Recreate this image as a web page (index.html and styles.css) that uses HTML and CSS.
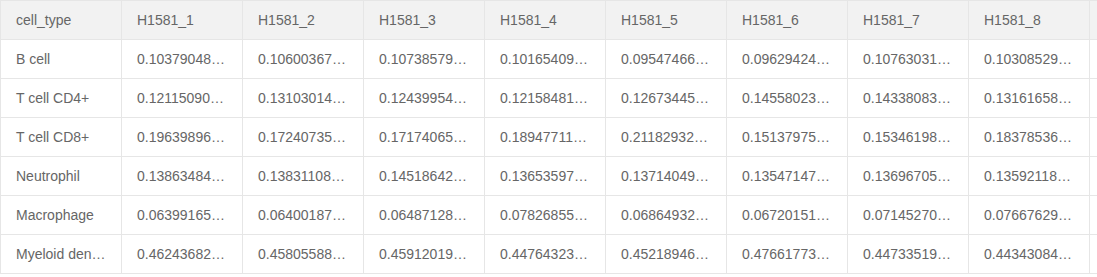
FILE: index.html
```html
<!DOCTYPE html>
<html>
<head>
<meta charset="utf-8">
<link rel="stylesheet" href="styles.css">
</head>
<body>
<div class="table-view">
<table class="grid">
<thead>
<tr>
<th><div class="cell">cell_type</div></th>
<th><div class="cell">H1581_1</div></th>
<th><div class="cell">H1581_2</div></th>
<th><div class="cell">H1581_3</div></th>
<th><div class="cell">H1581_4</div></th>
<th><div class="cell">H1581_5</div></th>
<th><div class="cell">H1581_6</div></th>
<th><div class="cell">H1581_7</div></th>
<th><div class="cell">H1581_8</div></th>
<th><div class="cell">H1581_9</div></th>
</tr>
</thead>
<tbody>
<tr>
<td><div class="cell">B cell</div></td>
<td><div class="cell">0.10379048127364512</div></td>
<td><div class="cell">0.10600367214583921</div></td>
<td><div class="cell">0.10738579318265403</div></td>
<td><div class="cell">0.10165409152837461</div></td>
<td><div class="cell">0.09547466281937452</div></td>
<td><div class="cell">0.09629424173628591</div></td>
<td><div class="cell">0.10763031529184736</div></td>
<td><div class="cell">0.10308529337261845</div></td>
<td><div class="cell"></div></td>
</tr>
<tr>
<td><div class="cell">T cell CD4+</div></td>
<td><div class="cell">0.12115090143826457</div></td>
<td><div class="cell">0.13103014527364918</div></td>
<td><div class="cell">0.12439954173829465</div></td>
<td><div class="cell">0.12158481627394851</div></td>
<td><div class="cell">0.12673445283746192</div></td>
<td><div class="cell">0.14558023718293746</div></td>
<td><div class="cell">0.14338083257382914</div></td>
<td><div class="cell">0.13161658447283915</div></td>
<td><div class="cell"></div></td>
</tr>
<tr>
<td><div class="cell">T cell CD8+</div></td>
<td><div class="cell">0.19639896182736451</div></td>
<td><div class="cell">0.17240735263847192</div></td>
<td><div class="cell">0.17174065372819463</div></td>
<td><div class="cell">0.18947711427384619</div></td>
<td><div class="cell">0.21182932472918364</div></td>
<td><div class="cell">0.15137975617283946</div></td>
<td><div class="cell">0.15346198327461829</div></td>
<td><div class="cell">0.18378536147283916</div></td>
<td><div class="cell"></div></td>
</tr>
<tr>
<td><div class="cell">Neutrophil</div></td>
<td><div class="cell">0.13863484273918264</div></td>
<td><div class="cell">0.13831108563728194</div></td>
<td><div class="cell">0.14518642537281946</div></td>
<td><div class="cell">0.13653597182736491</div></td>
<td><div class="cell">0.13714049618273645</div></td>
<td><div class="cell">0.13547147827364519</div></td>
<td><div class="cell">0.13696705337281946</div></td>
<td><div class="cell">0.13592118763827419</div></td>
<td><div class="cell"></div></td>
</tr>
<tr>
<td><div class="cell">Macrophage</div></td>
<td><div class="cell">0.06399165437281946</div></td>
<td><div class="cell">0.06400187627384915</div></td>
<td><div class="cell">0.06487128537281946</div></td>
<td><div class="cell">0.07826855417283946</div></td>
<td><div class="cell">0.06864932757382914</div></td>
<td><div class="cell">0.06720151367283945</div></td>
<td><div class="cell">0.07145270647382916</div></td>
<td><div class="cell">0.07667629157382914</div></td>
<td><div class="cell"></div></td>
</tr>
<tr>
<td><div class="cell">Myeloid dendritic cell</div></td>
<td><div class="cell">0.46243682167283946</div></td>
<td><div class="cell">0.45805588477382915</div></td>
<td><div class="cell">0.45912019367283941</div></td>
<td><div class="cell">0.44764323187364519</div></td>
<td><div class="cell">0.45218946257382916</div></td>
<td><div class="cell">0.47661773427381946</div></td>
<td><div class="cell">0.44733519847382916</div></td>
<td><div class="cell">0.44343084177382914</div></td>
<td><div class="cell"></div></td>
</tr>
</tbody>
</table>
</div>
</body>
</html>
```
FILE: styles.css
```css
html, body {
  margin: 0;
  padding: 0;
  background: #fff;
}

.table-view {
  width: 1097px;
  overflow: hidden;
}

.grid {
  border-collapse: separate;
  border-spacing: 0;
  table-layout: fixed;
  width: 1211px;
  border-top: 1px solid #e6e6e6;
  border-left: 1px solid #e6e6e6;
  font-family: "Liberation Sans", Arial, Helvetica, sans-serif;
  font-size: 14px;
  color: #666;
}

.grid th,
.grid td {
  width: 120px;
  padding: 5px 0;
  border-right: 1px solid #e6e6e6;
  border-bottom: 1px solid #e6e6e6;
  text-align: left;
  font-weight: normal;
}

.grid thead th {
  background: #f2f2f2;
}

.cell {
  box-sizing: border-box;
  width: 120px;
  height: 28px;
  line-height: 28px;
  padding: 0 15px;
  overflow: hidden;
  white-space: nowrap;
  text-overflow: ellipsis;
}
```
